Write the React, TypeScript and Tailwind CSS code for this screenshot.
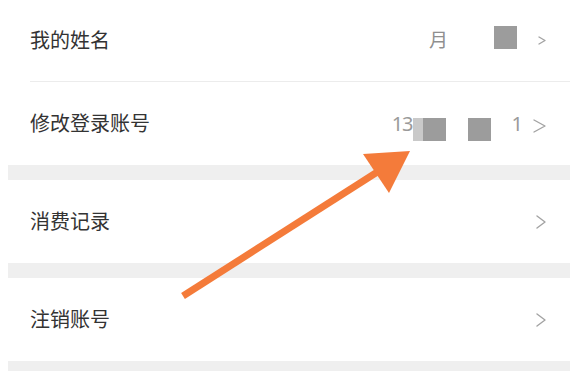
import React from 'react';

interface ChevronProps {
    w: number;
    h: number;
}

function Chevron({ w, h }: ChevronProps) {
    return (
        <svg width={w} height={h} viewBox={`0 0 ${w} ${h}`} className="shrink-0">
            <polyline
                points={`1,1 ${w - 1},${h / 2} 1,${h - 1}`}
                fill="none"
                stroke="#a3a3a3"
                strokeWidth="1.4"
                strokeLinecap="round"
                strokeLinejoin="round"
            />
        </svg>
    );
}

function Block({ light = false }: { light?: boolean }) {
    return (
        <span className="flex h-[23px]">
            {light && <span className="w-[10px] h-full bg-[#c9c9c9]" />}
            <span className="w-[23px] h-full bg-[#9c9c9c]" />
        </span>
    );
}

/**
 * Account settings list with an orange arrow pointing at the login account row
 */
export default function App() {
    return (
        <div
            className="relative w-[581px] h-[371px] overflow-hidden bg-white text-[#333]"
            style={{ fontFamily: '"Noto Sans", "Noto Sans CJK SC", sans-serif' }}
        >
            <div className="mx-[8px] w-[562px] flex flex-col">
                {/* 我的姓名 */}
                <div className="h-[81px] flex items-center pl-[22px] pr-[24px]">
                    <span className="text-[20px] leading-none">我的姓名</span>
                    <span className="ml-auto flex items-center">
                        <span className="text-[19px] leading-none text-[#8f8f8f]">月</span>
                        <span className="ml-[46px] w-[23px] h-[23px] bg-[#9c9c9c] -translate-y-[3px]" />
                        <span className="ml-[21px]">
                            <Chevron w={8} h={9} />
                        </span>
                    </span>
                </div>
                <div className="ml-[22px] h-px bg-[#ececec]" />

                {/* 修改登录账号 */}
                <div className="h-[83px] flex items-center pl-[22px] pr-[24px]">
                    <span className="text-[20px] leading-none">修改登录账号</span>
                    <span className="ml-auto flex items-center">
                        <span className="text-[20px] leading-none text-[#9a9a9a] tracking-[-1px]">13</span>
                        <span className="translate-y-[6px]">
                            <Block light />
                        </span>
                        <span className="ml-[22px] translate-y-[6px]">
                            <Block />
                        </span>
                        <span className="ml-[21px] text-[20px] leading-none text-[#9a9a9a]">1</span>
                        <span className="ml-[10px] translate-y-[2px]">
                            <Chevron w={13} h={14} />
                        </span>
                    </span>
                </div>
                <div className="h-[15px] bg-[#efefef]" />

                {/* 消费记录 */}
                <div className="h-[83px] flex items-center pl-[22px] pr-[24px]">
                    <span className="text-[20px] leading-none">消费记录</span>
                    <span className="ml-auto">
                        <Chevron w={10} h={14} />
                    </span>
                </div>
                <div className="h-[15px] bg-[#efefef]" />

                {/* 注销账号 */}
                <div className="h-[83px] flex items-center pl-[22px] pr-[24px]">
                    <span className="text-[20px] leading-none">注销账号</span>
                    <span className="ml-auto">
                        <Chevron w={10} h={14} />
                    </span>
                </div>
                <div className="h-[10px] bg-[#efefef]" />
            </div>

            {/* Orange annotation arrow */}
            <svg
                className="absolute inset-0 pointer-events-none"
                width="581"
                height="371"
                viewBox="0 0 581 371"
            >
                <line x1="183" y1="296" x2="382" y2="169" stroke="#f47b3a" strokeWidth="7" />
                <polygon points="363,154 410,151 389,193" fill="#f47b3a" />
            </svg>
        </div>
    );
}
